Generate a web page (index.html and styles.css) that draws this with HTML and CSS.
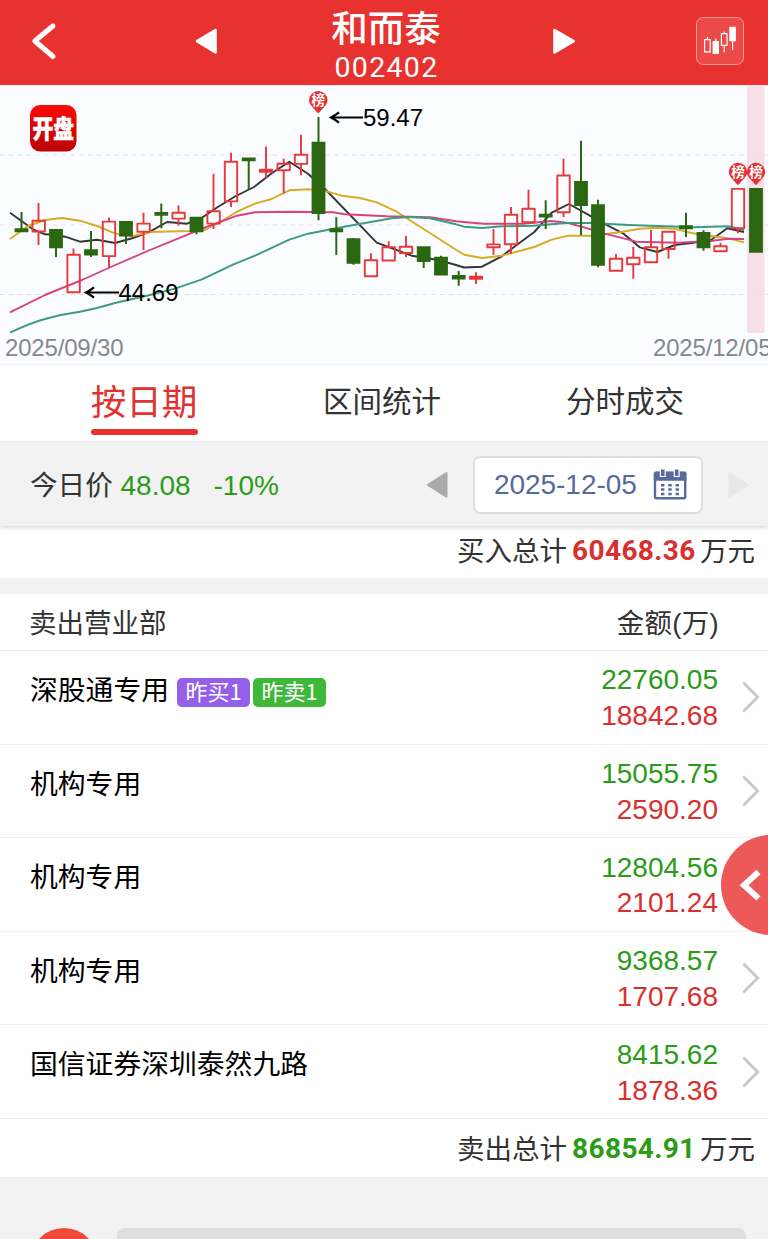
FILE: index.html
```html
<!DOCTYPE html>
<html lang="zh-CN">
<head>
<meta charset="utf-8">
<title>和而泰 002402</title>
<link rel="stylesheet" href="styles.css">
</head>
<body>
<div class="app">
  <header class="topbar">
    <svg class="back" width="30" height="42" viewBox="0 0 30 42"><path d="M24 6 5.8 21 24 36.5" fill="none" stroke="#fff" stroke-width="5" stroke-linecap="round" stroke-linejoin="round"/></svg>
    <svg class="prev" width="24" height="28" viewBox="0 0 24 28"><path d="M2 14.2 20.5 3V25.4Z" fill="#fff" stroke="#fff" stroke-width="2.6" stroke-linejoin="round"/></svg>
    <div class="stock">
      <h1 class="stock-name">和而泰</h1>
      <div class="stock-code">002402</div>
    </div>
    <svg class="next" width="24" height="28" viewBox="0 0 24 28"><path d="M21.7 14.2 2.5 3V25.4Z" fill="#fff" stroke="#fff" stroke-width="2.6" stroke-linejoin="round"/></svg>
    <div class="kline-button">
      <svg width="34" height="30" viewBox="0 0 34 30" fill="none" stroke="#fff" stroke-width="1.2">
        <path d="M1.6 13.6h5.6v12.3H1.6zM4.4 11v2.6M18.4 7.7h5.6v11.6h-5.6zM21.2 5.4v2.3M21.2 19.3v7M12.8 12.5V16M29.6 15v9"/>
        <path d="M9.6 15h6.4v13H9.6zM26.3.8h6.6v14.4h-6.6z" fill="#fff" stroke="none"/>
      </svg>
    </div>
  </header>

  <section class="chart">
    <svg class="chart-svg" width="768" height="280" viewBox="0 85 768 280">
      <defs>
        <linearGradient id="badge" x1="0" y1="0" x2="0" y2="1"><stop offset="0" stop-color="#f90b06"/><stop offset="1" stop-color="#ba0306"/></linearGradient>
        <g id="pin"><path d="M-9.2 0A9.2 9.2 0 1 1 9.2 0C9.2 4.5 4.5 8 0 13.3C-4.5 8-9.2 4.5-9.2 0Z" fill="#e62f30"/><text class="pin-text" x="0" y="4.7">榜</text></g>
      </defs>
      <rect x="747" y="86" width="17.5" height="247" fill="#f6dfe7"/>
      <path d="M0 155H768M0 225H768M0 294.5H768" class="grid"/>

      <g class="average">
        <path stroke="#333538" d="M10 212.7 33 229.3 45 234.3 55 234.7 65 236.7 80 241.7 97 239.7 115 243 133 238 150 231.7 167 222 187 223.7 200 219 217 207.5 235 196.5 254 187 271.7 173.3 289.3 161.7 308 173.7 325 189 376.7 242.7 411.7 255.7 438 260 456 265 464 267.5 482 266.7 501.7 256.3 516.7 245 534.3 232 551.7 212.7 569 204 591.7 216.7 604.7 224 623 233.3 639.7 247.3 657.3 252 674.7 245 693 242.7 711 240 727.3 228.3 744 232"/>
        <path stroke="#d8ac1f" d="M10 239 28 226 45 220 62 218 80 220.7 97 226 113 232.7Q125 236 133 236L150 232 168 231.5 190 231 205 230 220 222 237 211.7 255 203.7 271.7 199 289.3 190.3 308.3 189.3 326.7 191.3 341.7 195.7 360 198 376.7 202.3 396.7 211.7 456 249.7 464.3 254.7 482.3 258 501.7 255.7 534.3 247 551.7 239.7 568.3 235.7 593 235.7 621.3 232 639.7 228.7 656 227.7 674.7 228.7 691.3 233 711 236 728 238.3 744 242.3"/>
        <path stroke="#d6437f" d="M10 312.3 45 295 82 280 113 266 150 250 205 227.5 237 215.7 255 212.3 289.3 211.7 333 212.3 345 214.3 386.7 216.3 430 217.3 456 221.3 483.3 223.7 523.3 223.7 551.7 221 568.3 223 591.7 229.7 604.7 233.7 636.3 241.7 678 242.7 711 241 728 238.7 744 239"/>
        <path stroke="#3b9c80" d="M10 332.7Q30 323 45 319Q62 314 80 311.7L97 308 115 303 150 295 175 288.7 202 279.3 233 264.7 255 255.7 289.3 239.7 308 233.7 346.7 226.3 391.7 218.3 410 217 430 218.3 456 224.3 464 226.7 482 228 501.7 226.3 533 225.7 566.7 223 591.7 223 628 225 694.7 227.3 728 226.3 744 230"/>
      </g>

      <path class="rise" d="M38.5 203V220.3M38.5 231.7V245M73.5 248.5V254.5M109 217.5V221.3M109 256.3V267.5M143.5 212.7V223.3M143.5 232V250M178.5 205.5V212.5M178.5 218.7V225.6M213.5 173.7V211M213.5 223.7V229M231 152.7V161.5M231 201.5V207M266 146.5V178M283.7 158.7V163.5M283.7 170.5V193.3M301 134.7V154.5M301 164V175.3M371 253.3V260M388.7 241.3V247M406 236V246.5M406 253V257.3M476 272.3V284M493.5 229V244M493.5 247.5V254.7M511 207V214.5M511 244.5V254M528.5 189.7V208.5M563.5 158.7V175.3M563.5 212.3V217M616 254V258.7M633.3 247V257.5M633.3 264.5V278.7M651 230V247M668.5 249V258.7M720.5 242.7V246M738 228.3V233.3"/>
      <path class="rise" d="M32.5 220.8h12.4V231.5h-12.4zM67.4 254.8h12.4V292.2h-12.4zM102.8 221.6h12.4V256.1h-12.4zM137.4 223.6h12.4V231.8h-12.4zM172.4 212.8h12.4V218.6h-12.4zM207.4 211.2h12.4V223.6h-12.4zM224.8 161.7h12.4V201.4h-12.4zM259.8 169.8h12.4V171.7h-12.4zM277.5 163.8h12.4V170.3h-12.4zM294.8 154.7h12.4V163.9h-12.4zM364.8 260.3h12.4V276.2h-12.4zM382.5 247.2h12.4V260.5h-12.4zM399.8 246.7h12.4V253h-12.4zM469.8 276.7h12.4V278.7h-12.4zM487.3 244.4h12.4V247.3h-12.4zM504.8 214.8h12.4V244.2h-12.4zM522.3 208.7h12.4V222.2h-12.4zM557.3 175.5h12.4V212.2h-12.4zM609.8 258.8h12.4V270.8h-12.4zM627.1 257.8h12.4V264.3h-12.4zM644.8 247.2h12.4V262.3h-12.4zM662.3 231.8h12.4V249h-12.4zM714.3 246.3h12.4V251.2h-12.4zM731.8 188.9h12.4V228.2h-12.4z"/>
      <path class="fall-wick" d="M21.5 212V232M56 245V257M91 231V257M126 235V244M161.3 203.5V228.3M196.5 230V234.3M248.7 158V189.5M318.5 117V220.3M336.3 217.3V255M353.5 238V264.7M423.7 247V268M441 255.7V275M458.7 271V285.7M545.7 200.3V229M581 140.7V235M598 199.7V267.3M686 212.7V237M703.5 230.3V250.7"/>
      <path class="fall-body" d="M21.5 228.3V232.2M56 229V248.3M91 249.3V255.4M126 221V236.5M161.3 212V215.8M196.5 216.7V232.3M248.7 157.4V161.2M318.5 141.7V214M336.3 228.3V232.2M353.5 238.3V263.7M423.7 246.3V262M441 256.7V275.5M458.7 275V279.5M545.7 213.7V217.5M581 181V206M598 204.3V265.7M686 225.3V229.3M703.5 232V248.3M756 188V252.7"/>

      <g class="marks">
        <path d="M119 292.5H86M94 287.3Q90 290.5 86 292.5Q90 294.5 94 297.7M363 117.5H331M339 112.3Q335 115.5 331 117.5Q335 119.5 339 122.7"/>
        <text x="118.5" y="301">44.69</text>
        <text x="363" y="126">59.47</text>
      </g>
      <use href="#pin" x="318.3" y="100.2"/>
      <use href="#pin" x="738" y="172"/>
      <use href="#pin" x="756" y="172"/>
      <rect x="30" y="105" width="46.5" height="46.5" rx="10" fill="url(#badge)"/>
      <text class="badge-text" x="32.5" y="138" textLength="41.5" lengthAdjust="spacingAndGlyphs">开盘</text>
      <text class="axis" x="5" y="356" textLength="118.5">2025/09/30</text>
      <text class="axis" x="653" y="356" textLength="118.5">2025/12/05</text>
    </svg>
  </section>

  <nav class="tabs">
    <div class="tab tab-active"><span>按日期</span></div>
    <div class="tab"><span>区间统计</span></div>
    <div class="tab"><span>分时成交</span></div>
  </nav>

  <section class="pricebar">
    <span class="price-label">今日价</span><span class="price">48.08</span><span class="change">-10%</span>
    <svg class="day-prev" width="22" height="28" viewBox="0 0 22 28"><path d="M2 13.8 20.5 2V25.6Z" fill="#aaa" stroke="#aaa" stroke-width="2" stroke-linejoin="round"/></svg>
    <div class="date-box">
      <span>2025-12-05</span>
      <svg width="34" height="32" viewBox="0 0 34 32">
        <rect x="2" y="4" width="30.2" height="25.3" rx="1.5" fill="#fff" stroke="#566a9d" stroke-width="2.4"/>
        <path d="M.8 4.5Q.8 2.5 2.8 2.5H31.4Q33.4 2.5 33.4 4.5V11.8H.8z" fill="#566a9d"/>
        <path d="M9.8 0v8M23.7 0v8" stroke="#fff" stroke-width="6"/>
        <path d="M9.8.4v6.6M23.7.4v6.6" stroke="#566a9d" stroke-width="3.6"/>
        <path d="M8 16.2h19M8 20.5h19M8 25h19" stroke="#566a9d" stroke-width="2.6" stroke-dasharray="3.4 3.9"/>
      </svg>
    </div>
    <svg class="day-next" width="22" height="28" viewBox="0 0 22 28"><path d="M20 13.8 1.5 2V25.6Z" fill="#e8e8e8" stroke="#e8e8e8" stroke-width="2" stroke-linejoin="round"/></svg>
  </section>

  <div class="total total-buy"><span>买入总计</span><b class="up">60468.36</b><span>万元</span></div>

  <section class="sellers">
    <div class="list-head"><span>卖出营业部</span><span class="head-amount">金额(万)</span></div>
    <div class="row"><div class="branch">深股通专用<i class="tag tag-buy">昨买1</i><i class="tag tag-sell">昨卖1</i></div><div class="amount"><span class="down">22760.05</span><span class="up">18842.68</span></div><svg class="arrow" width="18" height="32" viewBox="0 0 18 32"><path d="M1.3 1.5 15.7 16 1.3 30.5"/></svg></div>
    <div class="row"><div class="branch">机构专用</div><div class="amount"><span class="down">15055.75</span><span class="up">2590.20</span></div><svg class="arrow" width="18" height="32" viewBox="0 0 18 32"><path d="M1.3 1.5 15.7 16 1.3 30.5"/></svg></div>
    <div class="row"><div class="branch">机构专用</div><div class="amount"><span class="down">12804.56</span><span class="up">2101.24</span></div><svg class="arrow" width="18" height="32" viewBox="0 0 18 32"><path d="M1.3 1.5 15.7 16 1.3 30.5"/></svg></div>
    <div class="row"><div class="branch">机构专用</div><div class="amount"><span class="down">9368.57</span><span class="up">1707.68</span></div><svg class="arrow" width="18" height="32" viewBox="0 0 18 32"><path d="M1.3 1.5 15.7 16 1.3 30.5"/></svg></div>
    <div class="row"><div class="branch">国信证券深圳泰然九路</div><div class="amount"><span class="down">8415.62</span><span class="up">1878.36</span></div><svg class="arrow" width="18" height="32" viewBox="0 0 18 32"><path d="M1.3 1.5 15.7 16 1.3 30.5"/></svg></div>
    <div class="total total-sell"><span>卖出总计</span><b class="down">86854.91</b><span>万元</span></div>
  </section>

  <footer class="bottom"><div class="bottom-dot"></div><div class="bottom-input"></div></footer>

  <div class="drawer"><svg width="26" height="36" viewBox="0 0 26 36"><path d="M21.5 5 7 18.2 21.5 31.4" fill="none" stroke="#fff" stroke-width="6"/></svg></div>
</div>
</body>
</html>
```

FILE: styles.css
```css
* { box-sizing: border-box; }
body {
  margin: 0;
  background: #f2f2f2;
  font-family: "Liberation Sans", "Noto Sans CJK SC", sans-serif;
  color: #333;
}
.app { position: relative; width: 768px; height: 1239px; overflow: hidden; }
svg { display: block; flex: none; }

.topbar { display: flex; height: 85px; background: #e73230; color: #fff; }
.back { margin: 20px 0 0 29px; }
.prev { margin: 27px 0 0 136px; }
.stock { width: 130px; margin-left: 102px; text-align: center; }
.stock-name { margin: 8px 0 0; font-size: 36.5px; line-height: 44px; font-weight: 500; }
.stock-code { font: 28.5px/31px Roboto, sans-serif; letter-spacing: 1.3px; padding-left: 1px; }
.next { margin: 27px 0 0 101px; }
.kline-button {
  display: flex; align-items: center; justify-content: center;
  width: 48px; height: 48px; margin: 17px 0 0 120px;
  border: 1px solid #f39897; border-radius: 7px; background: #ec4a49;
}

.chart { height: 280px; background: #fbfcff; border-bottom: 1px solid #eaecee; border-top: 1px solid #eceef1; }
.chart-svg { margin-top: -1px; }
.grid { fill: none; stroke: #e1e3e7; stroke-width: 1.2; stroke-dasharray: 4.4 4.4; }
.average { fill: none; stroke-width: 1.9; stroke-linejoin: round; }
.rise { fill: none; stroke: #e6393a; stroke-width: 1.9; stroke-linejoin: round; }
.fall-wick { stroke: #2b6611; stroke-width: 2; }
.fall-body { stroke: #2b6611; stroke-width: 13.8; }
.marks path { fill: none; stroke: #000; stroke-width: 2.2; }
.marks text { font-size: 24px; fill: #000; }
.pin-text { font: 700 13.5px "Noto Sans CJK SC", sans-serif; fill: #fff; text-anchor: middle; }
.badge-text { font: 900 25px "Noto Sans CJK SC", sans-serif; fill: #fff; stroke: #fff; stroke-width: .5; }
.axis { font-size: 24px; fill: #85888b; }

.tabs { display: grid; grid-template-columns: 144px 332px 154px; padding-left: 72px; height: 76px; background: #fff; }
.tab { font-size: 29.5px; line-height: 74px; text-align: center; }
.tab-active { color: #e03331; font-size: 35.6px; display: flex; justify-content: center; }
.tab-active span { position: relative; height: 70px; line-height: 77px; }
.tab-active span::after {
  content: ""; position: absolute; left: 0; bottom: 0;
  width: 107px; height: 6px; border-radius: 3px; background: #e73230;
}

.pricebar {
  display: flex; position: relative; height: 85px; padding-left: 30px;
  background: #f2f2f2; border-top: 1px solid #e9e9e9;
  box-shadow: 0 2px 4px rgba(0, 0, 0, .15);
  font-size: 28px; line-height: 87px; white-space: nowrap;
}
.price-label { width: 90.5px; font-size: 27.6px; }
.price, .change { color: #2b9b18; }
.price { width: 93px; }
.change { width: 212.5px; }
.day-prev { margin-top: 29px; }
.date-box {
  display: flex; justify-content: space-between; width: 230px; height: 58px; margin: 14px 0 0 25px;
  padding: 11px 14px 0 19px; border: 2px solid #dedede; border-radius: 7px; background: #fff;
  color: #566a9d; line-height: 31px;
}
.date-box span { letter-spacing: -.05px; }
.day-next { margin: 29px 0 0 25px; }

.total {
  display: flex; justify-content: flex-end; padding-right: 13px;
  background: #fff; font-size: 27.5px; white-space: nowrap;
}
.total b { width: 128px; padding-left: 1px; margin: 0 1px 0 4px; font: 700 28px Roboto, sans-serif; line-height: inherit; letter-spacing: .4px; }
.total-buy { height: 52px; line-height: 51px; }
.total-sell { height: 58px; line-height: 62px; }
.total-buy b { line-height: 49px; }
.total-sell b { line-height: 60px; }
.up { color: #d9302f; }
.down { color: #2b9b18; }

.sellers { margin-top: 16px; background: #fff; }
.list-head {
  display: flex; justify-content: space-between; height: 57px; padding: 0 49px 0 29px;
  font-size: 27.5px; line-height: 59px; border-bottom: 1px solid #ededed;
}
.head-amount { letter-spacing: .3px; }
.row { display: flex; height: 93.6px; padding-left: 30px; border-bottom: 1.5px solid #f0f0f0; color: #000; }
.branch { display: flex; flex: 1; height: 80px; align-items: center; font-size: 27.8px; line-height: 80px; white-space: nowrap; }
.tag {
  height: 29px; width: 73px; margin-top: 2px; border-radius: 5px; color: #fff; text-align: center;
  font: 22px/24px "Noto Sans CJK SC", sans-serif;
}
.tag-buy { margin-left: 8px; background: #945fe9; }
.tag-sell { margin-left: 3px; background: #3fb83a; }
.amount { display: flex; flex-direction: column; padding: 11.4px .6px 0 0; text-align: right; font-size: 28px; line-height: 35.8px; }
.up, .down { display: block; }
.arrow { margin: 30.4px 8px 0 23.4px; fill: none; stroke: #c7c7c7; stroke-width: 2.7; }

.bottom { display: flex; align-items: flex-start; padding: 51.5px 0 0 30px; }
.bottom-dot { width: 68px; height: 68px; border-radius: 50%; background: #ef4a37; }
.bottom-input { width: 629px; height: 60px; margin-left: 19px; border-radius: 8px; background: #dedede; }

.drawer {
  position: absolute; left: 721px; top: 835px; width: 100px; height: 100px; padding: 32px 0 0 16px;
  border-radius: 50%; background: rgba(235, 73, 73, .91);
}
```
